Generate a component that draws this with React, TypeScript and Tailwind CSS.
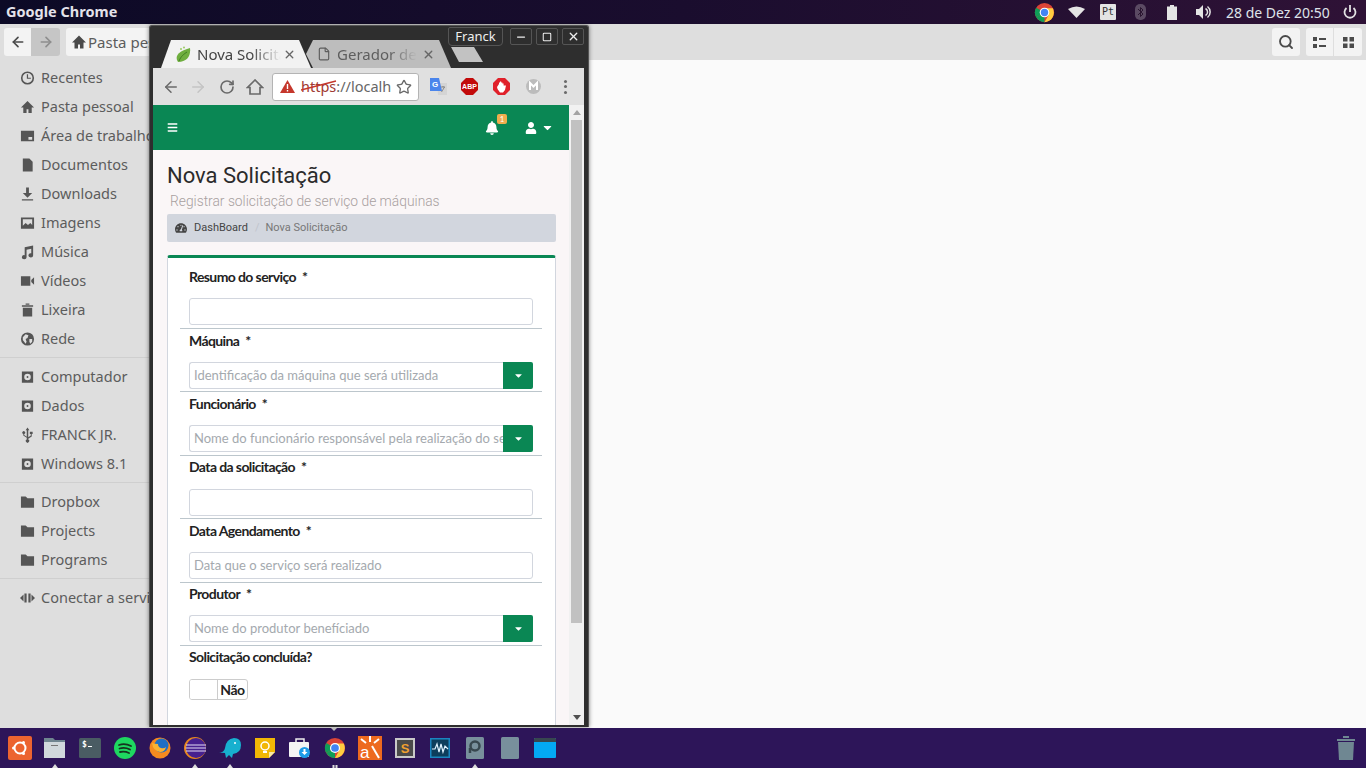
import React from "react";
import { FaBars, FaBell, FaUser, FaCaretDown, FaTachometerAlt } from "react-icons/fa";
import { ArrowLeft, ArrowRight, RotateCw, Star, Search, X, Minus, Square, File } from "lucide-react";

const P = ({ children, w = 16, vb = "0 0 16 16" }: { children: React.ReactNode; w?: number; vb?: string }) => (
  <svg width={w} height={w} viewBox={vb} fill="currentColor">{children}</svg>
);

const disk = <P><path fillRule="evenodd" d="M2 2h12v12H2z M8 4.500a3.500 3.500 0 1 0 0 7a3.500 3.500 0 0 0 0-7z M8 7a1 1 0 1 1 0 2a1 1 0 0 1 0-2z" /></P>;
const folder = <P><path d="M1 2h5l2 2h7v10H1z" /></P>;

const side1: [string, React.ReactNode][] = [
  ["Recentes", <P><path fillRule="evenodd" d="M8 1a7 7 0 1 0 0 14A7 7 0 0 0 8 1zm0 1.700a5.300 5.300 0 1 1 0 10.600A5.300 5.300 0 0 1 8 2.700z" /><path d="M7.300 4h1.300v3.600h3v1.300H7.300z" /></P>],
  ["Pasta pessoal", <P><path d="M8 1.500 1 8.500h2.500V14.500h3.500v-4h2v4h3.500V8.500H15z" /></P>],
  ["Área de trabalho", <P><path fillRule="evenodd" d="M1 2.500h14v11H1z M9 9v3h4V9z" /></P>],
  ["Documentos", <P><path d="M3 1h7l3.500 3.500V15H3z" /></P>],
  ["Downloads", <P><path d="M6.500 1h3v6H13l-5 5-5-5h3.500zM2 13.500h12V15H2z" /></P>],
  ["Imagens", <P><path fillRule="evenodd" d="M1 2h14v12H1z M3 4v7l3-3 2.500 2L11 8l2 2V4z" /></P>],
  ["Música", <P><path d="M5 3l9-2v10.500a2.500 2.200 0 1 1-2-2.100V4.500L7 5.600v7.900a2.500 2.200 0 1 1-2-2.100z" /></P>],
  ["Vídeos", <P><path d="M1 3h10v10H1zM12 7l3-3v8l-3-3z" /></P>],
  ["Lixeira", <P><path d="M2 3h12v1.500H2zM6 1h4v1.500H6zM3 5.500h10V15H3z" /></P>],
  ["Rede", <P><path fillRule="evenodd" d="M8 1a7 7 0 1 0 0 14A7 7 0 0 0 8 1zM3 6l3-3 3 1-1 3-2 1 1 3-1 2-3-4zm7 2 3 0 0 3-2 2-1-2z" /></P>],
];
const side2: [string, React.ReactNode][] = [
  ["Computador", disk],
  ["Dados", disk],
  ["FRANCK JR.", <P><path d="M8 0l2 3H8.800v7.300l2.700-1.800V7H10.500V4.500h3V7h-1v2.500l-3.700 2.500v.8a1.800 1.800 0 1 1-1.600 0V11L3.500 8.500V6.800a1.500 1.500 0 1 1 1 0V8l2.700 1.800V3H6z" /></P>],
  ["Windows 8.1", disk],
];
const side3: [string, React.ReactNode][] = [["Dropbox", folder], ["Projects", folder], ["Programs", folder]];

const SideRow = ({ icon, label }: { icon: React.ReactNode; label: string }) => (
  <div className="flex h-[29px] items-center gap-[6px] pl-[20px] whitespace-nowrap text-[#5c5c5c]">
    <span className="flex w-[15px] justify-center text-[#555]">{icon}</span>
    <span>{label}</span>
  </div>
);
const Sep = () => <div className="my-[4px] h-[1px] bg-[#cfcfcf]" />;

const NavBtn = ({ children, cls }: { children: React.ReactNode; cls: string }) => (
  <div className={`flex h-[28px] items-center justify-center ${cls}`}>{children}</div>
);

const Field = ({ label, ph, star = true, select = false, h, top }: { label: string; ph?: string; star?: boolean; select?: boolean; h: string; top: string }) => (
  <div className={`ml-[12px] mr-[13px] flex flex-col border-b border-[#bcc6cc] px-[9px] ${h}`}>
    <div className={`flex items-center text-[14px] font-bold leading-[20px] tracking-[-0.6px] text-[#222] ${top}`}>
      {label}{star && <span className="ml-[6px]">*</span>}
    </div>
    <div className="flex h-[27px]">
      <div className={`flex min-w-0 flex-1 items-center overflow-hidden whitespace-nowrap border border-[#d2d6de] bg-white pl-[4px] text-[13px] text-[#a4a9ae] ${select ? "rounded-l-[3px] border-r-0" : "rounded-[3px]"}`}>
        {ph}
      </div>
      {select && (
        <div className="flex w-[30px] shrink-0 items-center justify-center rounded-r-[2px] bg-[#0a8754] text-white">
          <FaCaretDown size={11} />
        </div>
      )}
    </div>
  </div>
);

const Dock = ({ children, dot, two }: { children: React.ReactNode; dot?: boolean; two?: boolean }) => (
  <div className="relative flex h-[40px] w-[35px] items-center justify-center">
    {children}
    {dot && <span className="absolute bottom-0 left-1/2 h-0 w-0 -translate-x-1/2 border-x-[3px] border-b-[4px] border-x-transparent border-b-[#ddd]" />}
    {two && (
      <span className="absolute bottom-0 left-1/2 flex -translate-x-1/2 gap-[1px]">
        <span className="h-[3px] w-[2px] bg-[#ddd]" />
        <span className="h-[3px] w-[2px] bg-[#ddd]" />
      </span>
    )}
  </div>
);

const ChromeLogo = ({ s }: { s: number }) => (
  <svg width={s} height={s} viewBox="0 0 24 24">
    <circle cx="12" cy="12" r="11" fill="#db4437" />
    <path d="M12 12 2.500 17.500A11 11 0 0 1 2.500 6.500z" fill="#0f9d58" />
    <path d="M12 12 2.500 17.500A11 11 0 0 0 12 23z" fill="#0f9d58" />
    <path d="M12 7h9.500A11 11 0 0 1 12 23l4.500-8z" fill="#ffcd40" />
    <circle cx="12" cy="12" r="5.500" fill="#fff" />
    <circle cx="12" cy="12" r="4.200" fill="#4285f4" />
  </svg>
);

export default function App() {
  return (
    <div className="relative flex h-[768px] w-[1366px] flex-col overflow-hidden bg-[#fafafa] font-['Noto_Sans',sans-serif]">
      {/* Top panel */}
      <div className="flex h-[24px] shrink-0 items-center justify-between bg-gradient-to-r from-[#0c0a26] via-[#1a0d2e] to-[#2f1236] pl-[6px] text-white">
        <span className="text-[14.500px] font-bold text-[#e4e2ea]">Google Chrome</span>
        <div className="flex items-center text-[#e4e4e4]">
          <span className="flex w-[32px] justify-center"><ChromeLogo s={21} /></span>
          <span className="flex w-[32px] justify-center">
            <svg width="17" height="12" viewBox="0 0 17 12" fill="currentColor"><path d="M0 3Q8.500-2 17 3L8.500 12z" /></svg>
          </span>
          <span className="flex w-[32px] justify-center">
            <span className="flex h-[16px] w-[16px] items-center justify-center rounded-[1px] bg-[#e4e4e4] font-['DejaVu_Sans_Mono',monospace] text-[10px] leading-none text-[#333]">Pt</span>
          </span>
          <span className="flex w-[32px] justify-center">
            <svg width="11" height="16" viewBox="0 0 11 16"><rect width="11" height="16" rx="5" fill="#5b4a63" /><path d="M3 5l5 5-2.500 2.500v-9L8 6 3 11" stroke="#2a1530" fill="none" /></svg>
          </span>
          <span className="flex w-[32px] justify-center">
            <svg width="10" height="15" viewBox="0 0 10 15" fill="currentColor"><path d="M3 0h4v1.500h3V15H0V1.500h3z" /></svg>
          </span>
          <span className="flex w-[32px] justify-center">
            <svg width="16" height="14" viewBox="0 0 16 14" fill="currentColor"><path d="M0 4h3l4-4v14l-4-4H0z" /><path d="M9.500 3.500a4 4 0 0 1 0 7M11.500 1.500a7 7 0 0 1 0 11" stroke="currentColor" strokeWidth="1.500" fill="none" /></svg>
          </span>
          <span className="ml-[6px] w-[108px] whitespace-nowrap text-[14px] text-[#dfe3ea]">28 de Dez 20:50</span>
          <span className="flex w-[32px] justify-center">
            <svg width="14" height="14" viewBox="0 0 14 14" fill="none" stroke="currentColor" strokeWidth="1.800"><path d="M7 0v7M3.500 3a5.500 5.500 0 1 0 7 0" /></svg>
          </span>
        </div>
      </div>

      {/* File manager */}
      <div className="relative flex min-h-0 flex-1 flex-col">
        <div className="flex h-[36px] shrink-0 items-center justify-between bg-[#dedede] px-[4px] text-[#4a4a4a]">
          <div className="flex items-center">
            <NavBtn cls="w-[27px] rounded-l-[3px] bg-[#f3f3f3]"><ArrowLeft size={16} strokeWidth={2.500} /></NavBtn>
            <NavBtn cls="w-[29px] rounded-r-[3px] bg-[#c6c6c6] text-[#8e8e8e]"><ArrowRight size={16} strokeWidth={2.500} /></NavBtn>
            <NavBtn cls="ml-[6px] w-[200px] justify-start gap-[1px] rounded-[3px] bg-[#f3f3f3] pl-[5px] text-[15px] text-[#5c5c5c]">
              <svg width="16" height="16" viewBox="0 0 16 16" fill="#4a4a4a"><path d="M8 1.500 1 8.500h2.500V14.500h3.500v-4h2v4h3.500V8.500H15z" /></svg>
              Pasta pessoal
            </NavBtn>
          </div>
          <div className="flex items-center gap-[6px]">
            <NavBtn cls="w-[28px] rounded-[3px] bg-[#f3f3f3]"><Search size={16} strokeWidth={2.800} /></NavBtn>
            <div className="flex gap-[1px]">
              <NavBtn cls="w-[27px] rounded-l-[3px] bg-[#f3f3f3]">
                <svg width="13" height="11" viewBox="0 0 13 11" fill="currentColor"><path d="M0 0h4v4H0zM6 1h7v2H6zM0 7h4v4H0zM6 8h7v2H6z" /></svg>
              </NavBtn>
              <NavBtn cls="w-[28px] rounded-r-[3px] bg-[#f3f3f3]">
                <svg width="11" height="11" viewBox="0 0 11 11" fill="currentColor"><path d="M0 0h4.500v4.500H0zM6.500 0H11v4.500H6.500zM0 6.500h4.500V11H0zM6.500 6.500H11V11H6.500z" /></svg>
              </NavBtn>
            </div>
          </div>
        </div>
        <div className="flex min-h-0 flex-1">
          <div className="w-[160px] shrink-0 overflow-hidden bg-[#dedede] pt-[3px] text-[14.500px]">
            {side1.map(([l, i]) => <SideRow key={l} label={l} icon={i} />)}
            <Sep />
            {side2.map(([l, i]) => <SideRow key={l} label={l} icon={i} />)}
            <Sep />
            {side3.map(([l, i]) => <SideRow key={l} label={l} icon={i} />)}
            <Sep />
            <SideRow label="Conectar a servidor" icon={
              <svg width="17" height="12" viewBox="0 0 17 12" fill="currentColor"><path d="M0 6l4-4v8zM5 1h2.500v10H5zM9.500 1H12v10H9.500zM13 2l4 4-4 4z" /></svg>
            } />
          </div>
          <div className="flex-1 bg-[#fafafa]" />
        </div>

        {/* Chrome window over the file manager */}
        <div className="absolute left-[149px] top-px flex h-[702px] w-[440px] flex-col overflow-hidden rounded-t-[3px] border border-[#555] border-b-0 bg-[#2e2e2e] pb-[2px] pl-[3px] pr-[4px] shadow-[0_0_4px_rgba(0,0,0,0.5)]">
          {/* Tabs */}
          <div className="relative flex h-[42px] shrink-0 items-end pl-[8px]">
            <div className="flex h-[28px] w-[150px] shrink-0 items-center bg-[#f2f2f2] pl-[15px] text-[#444] [clip-path:polygon(0_100%,10px_0,138px_0,100%_100%)]">
              <svg width="15" height="17" viewBox="0 0 15 17" className="shrink-0"><path d="M2 16C-2 10 3 5 14 2c1 8-3 14-12 14z" fill="#6fae3f" /><path d="M3 15C5 10 8 8 11 6" stroke="#3f7d23" fill="none" /><circle cx="5" cy="3" r="1" fill="#9ccc65" /><circle cx="8" cy="1.500" r="1" fill="#9ccc65" /></svg>
              <span className="ml-[6px] w-[84px] shrink-0 overflow-hidden whitespace-nowrap text-[15px] [mask-image:linear-gradient(to_right,black_65%,transparent)]">Nova Solicitação</span>
              <X size={13} strokeWidth={2.500} className="ml-[2px] shrink-0 text-[#666]" />
            </div>
            <div className="-ml-[5px] flex h-[28px] w-[145px] shrink-0 items-center bg-[#bdbdbd] pl-[11px] text-[#5e5e5e] [clip-path:polygon(7px_100%,0_50%,7px_0,133px_0,100%_100%)]">
              <File size={14} className="shrink-0" />
              <span className="ml-[6px] w-[80px] shrink-0 overflow-hidden whitespace-nowrap text-[15px] [mask-image:linear-gradient(to_right,black_65%,transparent)]">Gerador de senhas</span>
              <X size={13} strokeWidth={2.500} className="ml-[5px] shrink-0 text-[#666]" />
            </div>
            <div className="mb-[6px] h-[15px] w-[32px] shrink-0 bg-[#c2c2c2] [clip-path:polygon(0_0,23px_0,100%_100%,8px_100%)]" />
            <div className="absolute right-[81px] top-[1px] flex h-[19px] w-[55px] items-center justify-center rounded-b-[4px] rounded-t-[2px] border border-[#555] text-[13px] text-[#eee]">Franck</div>
            <div className="absolute right-0 top-[2px] flex gap-[4px] text-[#eee]">
              <span className="flex h-[17px] w-[22px] items-center justify-center rounded-[2px] border border-[#555]"><Minus size={12} strokeWidth={2.500} /></span>
              <span className="flex h-[17px] w-[22px] items-center justify-center rounded-[2px] border border-[#555]"><Square size={10} strokeWidth={2.500} /></span>
              <span className="flex h-[17px] w-[22px] items-center justify-center rounded-[2px] border border-[#555]"><X size={13} strokeWidth={2.500} /></span>
            </div>
          </div>
          {/* Toolbar */}
          <div className="flex h-[37px] shrink-0 items-center bg-[#e0e0e0] pl-[9px] text-[#6a6a6a]">
            <ArrowLeft size={18} className="shrink-0" />
            <ArrowRight size={18} className="ml-[9px] shrink-0 text-[#c4c4c4]" />
            <RotateCw size={16} strokeWidth={2.500} className="ml-[12px] shrink-0" />
            <svg width="18" height="18" viewBox="0 0 18 18" fill="none" stroke="currentColor" strokeWidth="1.700" className="ml-[11px] shrink-0"><path d="M9 2 1.500 9.500H4V16h10V9.500h2.500z" /></svg>
            <div className="ml-[8px] flex h-[28px] w-[147px] shrink-0 items-center rounded-[3px] border border-[#b4b4b4] bg-white pl-[7px]">
              <svg width="15" height="13" viewBox="0 0 15 13" className="shrink-0"><path d="M7.500 0 15 13H0z" fill="#c5372c" /><path d="M6.800 4h1.400v5H6.800zM6.800 10h1.400v1.500H6.800z" fill="#fff" /></svg>
              <span className="relative ml-[6px] w-[90px] overflow-hidden whitespace-nowrap text-[14.500px] text-[#666]">
                <span className="text-[#a03a32]">https</span>://localhost
                <svg width="36" height="14" viewBox="0 0 36 14" className="absolute left-0 top-[3px]"><path d="M0 11 35 2" stroke="#c5372c" strokeWidth="1.300" /></svg>
              </span>
              <Star size={16} className="ml-[5px] shrink-0" />
            </div>
            <span className="ml-[10px] flex w-[18px] shrink-0 justify-center">
              <svg width="17" height="17" viewBox="0 0 17 17"><path d="M7 5h10v12H8z" fill="#d4d4d4" /><path d="M0 0h9l3 13H0z" fill="#4a85ec" /><text x="2" y="9" fontSize="8" fontWeight="700" fill="#fff" fontFamily="Liberation Sans">G</text><path d="M11 9h4M13 8v1M11.500 14l3-5" stroke="#777" strokeWidth="0.800" /></svg>
            </span>
            <span className="ml-[14px] flex w-[17px] shrink-0 items-center justify-center">
              <svg width="17" height="17" viewBox="0 0 17 17"><path d="M5 0h7l5 5v7l-5 5H5l-5-5V5z" fill="#c20a0a" /><text x="8.500" y="11" textAnchor="middle" fontSize="7" fontWeight="700" fill="#fff" fontFamily="Liberation Sans">ABP</text></svg>
            </span>
            <span className="ml-[15px] flex w-[17px] shrink-0 justify-center">
              <svg width="17" height="17" viewBox="0 0 17 17"><path d="M5 0h7l5 5v7l-5 5H5l-5-5V5z" fill="#e0202a" /><path d="M4 9 6 6V4.500h1V3.500h1.200v1h1.200v1h1.200v2H13l-1 4.500-2 2.500H7L4.500 11z" fill="#fff" /></svg>
            </span>
            <span className="ml-[15px] flex w-[17px] shrink-0 justify-center">
              <svg width="15" height="15" viewBox="0 0 15 15"><circle cx="7.500" cy="7.500" r="7.500" fill="#bcbcbc" /><path d="M4 11V4l3.500 3.500L11 4v7" stroke="#fff" strokeWidth="2" fill="none" /></svg>
            </span>
            <span className="ml-[22px] flex shrink-0 flex-col gap-[2.500px]">
              <i className="block h-[3px] w-[3px] rounded-full bg-[#6a6a6a]" />
              <i className="block h-[3px] w-[3px] rounded-full bg-[#6a6a6a]" />
              <i className="block h-[3px] w-[3px] rounded-full bg-[#6a6a6a]" />
            </span>
          </div>
          {/* Page + scrollbar */}
          <div className="flex min-h-0 flex-1">
            <div className="min-w-0 flex-1 overflow-hidden bg-[#faf6f7] font-['Roboto',sans-serif]">
              <div className="flex h-[45px] items-center bg-[#0a8754] text-white">
                <FaBars size={11} className="ml-[14px]" />
                <div className="relative ml-auto">
                  <FaBell size={14} />
                  <span className="absolute -right-[8px] -top-[7px] flex h-[10px] w-[10px] items-center justify-center rounded-[2px] bg-[#f0ad4e] font-['Lato',sans-serif] text-[8px] leading-none">1</span>
                </div>
                <FaUser size={12} className="ml-[26px]" />
                <FaCaretDown size={13} className="ml-[4px] mr-[15px]" />
              </div>
              <div className="pl-[14px] pr-[13px]">
                <h1 className="mt-[12px] text-[22px] font-normal leading-[28px] text-[#2b2b2b]">Nova Solicitação</h1>
                <p className="ml-[3px] mt-[1px] text-[13.800px] font-light leading-[20px] text-[#a8a0a0]">Registrar solicitação de serviço de máquinas</p>
                <div className="mt-[3px] flex h-[28px] items-center rounded-[2px] bg-[#d2d6de] pl-[8px] text-[11px] text-[#444]">
                  <FaTachometerAlt size={12} />
                  <span className="ml-[7px]">DashBoard</span>
                  <span className="ml-[7px] text-[#c0c4cc]">/</span>
                  <span className="ml-[6px] text-[#777]">Nova Solicitação</span>
                </div>
                <div className="mt-[13px] h-[520px] rounded-t-[3px] border-x border-t-[3px] border-x-[#d2d6de] border-t-[#0a8754] bg-white font-['Lato',sans-serif]">
                  <Field label="Resumo do serviço" h="h-[71px]" top="h-[40px] pb-[2px]" />
                  <Field label="Máquina" ph="Identificação da máquina que será utilizada" select h="h-[63px]" top="h-[33px] pb-[9px]" />
                  <Field label="Funcionário" ph="Nome do funcionário responsável pela realização do serviço" select h="h-[64px]" top="h-[33px] pb-[10px]" />
                  <Field label="Data da solicitação" h="h-[63px]" top="h-[33px] pb-[12px]" />
                  <Field label="Data Agendamento" ph="Data que o serviço será realizado" h="h-[64px]" top="h-[33px] pb-[9px]" />
                  <Field label="Produtor" ph="Nome do produtor benefíciado" select h="h-[63px]" top="h-[32px] pb-[11px]" />
                  <div className="px-[21px]">
                    <div className="flex h-[20px] items-center text-[14px] font-bold tracking-[-0.6px] text-[#222]">Solicitação concluída?</div>
                    <div className="mt-[13px] flex h-[21px] w-[59px] items-stretch overflow-hidden rounded-[3px] border border-[#ccc] text-[14px] font-bold tracking-[-0.5px] text-[#222]">
                      <span className="w-[28px] border-r border-[#ccc] bg-white" />
                      <span className="flex flex-1 items-center justify-center">Não</span>
                    </div>
                  </div>
                </div>
              </div>
            </div>
            <div className="flex w-[15px] shrink-0 flex-col items-center bg-[#f1f1f1]">
              <span className="mt-[5px] h-0 w-0 border-x-[4px] border-b-[5px] border-x-transparent border-b-[#a3a3a3]" />
              <div className="mt-[5px] h-[503px] w-[11px] bg-[#c1c1c1]" />
              <span className="mt-auto mb-[5px] h-0 w-0 border-x-[4px] border-t-[5px] border-x-transparent border-t-[#505050]" />
            </div>
          </div>
        </div>
      </div>

      {/* Dock */}
      <div className="relative flex h-[40px] shrink-0 items-center bg-[#2d1559] pl-[2px]">
        <span className="absolute left-[331px] top-0 h-0 w-0 border-x-[3px] border-t-[3px] border-x-transparent border-t-[#bbb]" />
        <Dock>
          <svg width="24" height="24" viewBox="0 0 24 24"><rect width="24" height="24" rx="2" fill="#ec6430" /><circle cx="12" cy="12" r="5.500" fill="none" stroke="#fff" strokeWidth="2" /><circle cx="5.500" cy="12" r="1.500" fill="#fff" /><circle cx="15.500" cy="6.500" r="1.500" fill="#fff" /><circle cx="15.500" cy="17.500" r="1.500" fill="#fff" /></svg>
        </Dock>
        <Dock dot>
          <svg width="21" height="20" viewBox="0 0 21 20"><path d="M0 0h9l2 2h10v18H0z" fill="#6f8590" /><rect y="4" width="21" height="16" fill="#d0d8dc" /><rect x="7" y="7" width="7" height="1" fill="#777" /></svg>
        </Dock>
        <Dock>
          <svg width="22" height="20" viewBox="0 0 22 20"><rect width="22" height="20" rx="1.500" fill="#4a5c63" /><text x="3" y="9" fontSize="8" fontFamily="DejaVu Sans Mono" fontWeight="700" fill="#fff">$</text><rect x="9" y="8" width="4" height="1" fill="#fff" /></svg>
        </Dock>
        <Dock>
          <svg width="22" height="22" viewBox="0 0 22 22"><circle cx="11" cy="11" r="11" fill="#1ed760" /><path d="M5 8q6-2 12 1M5.500 11.500q5.500-1.500 10.500 1M6 15q5-1 9 1" stroke="#16331f" strokeWidth="1.800" fill="none" strokeLinecap="round" /></svg>
        </Dock>
        <Dock>
          <svg width="22" height="22" viewBox="0 0 22 22"><circle cx="11" cy="11" r="10.500" fill="#f58a1f" /><circle cx="12.500" cy="8.500" r="7" fill="#1f6fc4" /><path d="M3 6q1 8 8 9 5 0 6-5-2 2-5 1-3-1-3-4-3 0-6-1z" fill="#f9b233" /></svg>
        </Dock>
        <Dock dot>
          <svg width="22" height="22" viewBox="0 0 22 22"><circle cx="11" cy="11" r="11" fill="#e8871e" /><circle cx="12" cy="11" r="10" fill="#47208f" /><path d="M2 8h20M1.500 11h21M2 14h20" stroke="#e4dcf5" /></svg>
        </Dock>
        <Dock dot>
          <svg width="22" height="22" viewBox="0 0 22 22"><path d="M0 15q5 1 6-4Q7 2 15 1q7 0 7 7 0 8-8 9l-1 4-3-3-3 3-1-5q-4 0-6-1z" fill="#17b0cf" /><circle cx="16" cy="6" r="1" fill="#fff" /></svg>
        </Dock>
        <Dock>
          <svg width="20" height="20" viewBox="0 0 20 20"><path d="M0 0h20v14l-6 6H0z" fill="#f2b705" /><path d="M14 20v-6h6z" fill="#f9e9a5" /><circle cx="10" cy="8" r="4" fill="none" stroke="#fff" strokeWidth="1.500" /><path d="M8 13h4v2H8z" fill="#fff" /></svg>
        </Dock>
        <Dock>
          <svg width="22" height="20" viewBox="0 0 22 20"><path d="M7 4V1h8v3" fill="none" stroke="#eee" strokeWidth="1.500" /><rect y="4" width="20" height="15" rx="1" fill="#f4f4f4" /><circle cx="15.500" cy="14.500" r="5.500" fill="#1e9be8" /><path d="M14.500 11h2v3h2l-3 3-3-3h2z" fill="#fff" /></svg>
        </Dock>
        <Dock two><ChromeLogo s={22} /></Dock>
        <Dock>
          <svg width="24" height="24" viewBox="0 0 24 24"><rect width="24" height="24" fill="#ed6a1f" /><path d="M12 0v6M3 3l5 4M21 3l-5 4" stroke="#fff" strokeWidth="2" /><text x="2" y="22" fontSize="17" fontFamily="Liberation Sans" fill="#fff">a</text><path d="M14 10l7 12" stroke="#fff" strokeWidth="2" /></svg>
        </Dock>
        <Dock>
          <svg width="20" height="20" viewBox="0 0 20 20"><rect width="20" height="20" fill="#c9c9c9" /><rect x="2" y="2" width="16" height="16" fill="#4a4a4a" /><text x="10" y="15" textAnchor="middle" fontSize="13" fontWeight="700" fontFamily="Liberation Sans" fill="#f0a030">S</text></svg>
        </Dock>
        <Dock>
          <svg width="20" height="20" viewBox="0 0 20 20"><rect width="20" height="20" fill="#1a86c0" /><rect x="1.500" y="1.500" width="17" height="17" fill="#0d3e5c" /><path d="M2 11h3l2-5 2 8 2-8 2 8 2-6 3 3" stroke="#dff3ff" strokeWidth="1.200" fill="none" /></svg>
        </Dock>
        <Dock dot>
          <svg width="18" height="22" viewBox="0 0 18 22"><rect width="18" height="22" rx="1.500" fill="#78909c" /><circle cx="9" cy="9" r="4.500" fill="none" stroke="#37474f" strokeWidth="2.500" /><path d="M4 11v5" stroke="#37474f" strokeWidth="2.500" /></svg>
        </Dock>
        <Dock>
          <svg width="18" height="22" viewBox="0 0 18 22"><rect width="18" height="22" rx="1.500" fill="#78909c" /></svg>
        </Dock>
        <Dock>
          <svg width="22" height="20" viewBox="0 0 22 20"><rect width="22" height="20" rx="1" fill="#03a9f4" /><path d="M0 1a1 1 0 0 1 1-1h20a1 1 0 0 1 1 1v3H0z" fill="#37474f" /></svg>
        </Dock>
        <span className="ml-auto mr-[10px] flex">
          <svg width="20" height="24" viewBox="0 0 20 24" fill="#6f8792"><path d="M1 3h18v2H1zM7 0h6v2H7z" /><path d="M2 6h16l-1 18H3z" /></svg>
        </span>
      </div>
    </div>
  );
}
